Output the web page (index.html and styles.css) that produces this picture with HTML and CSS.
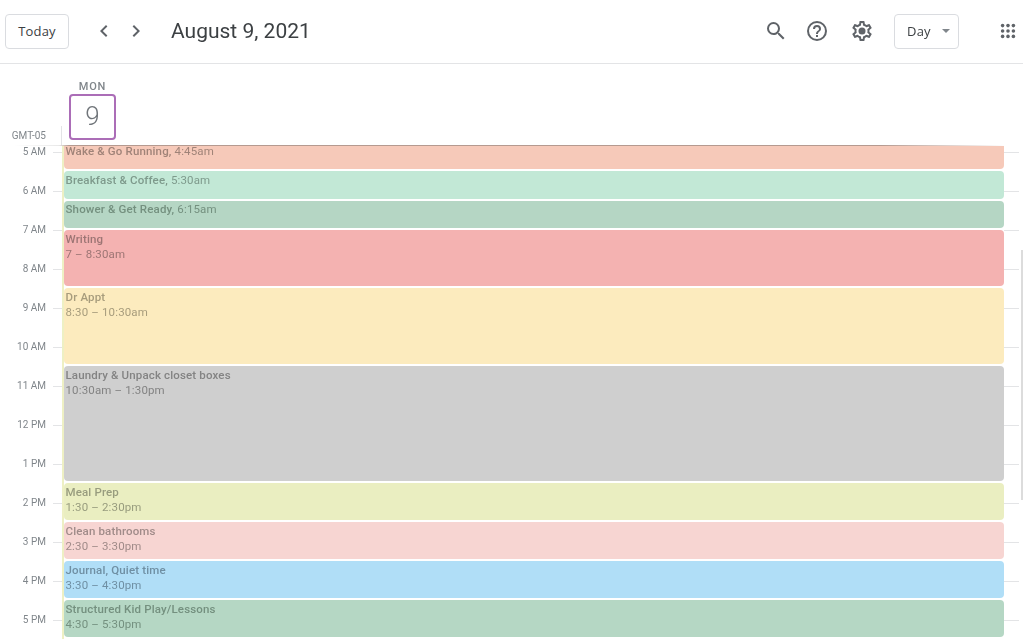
FILE: index.html
```html
<!DOCTYPE html>
<html lang="en">
<head>
  <meta charset="UTF-8">
  <title>Calendar - August 9, 2021</title>
  <link rel="stylesheet" href="styles.css">
</head>
<body>
  <header class="topbar">
    <button class="btn today">Today</button>
    <div class="nav-arrows">
      <svg width="24" height="24" viewBox="0 0 24 24"><path d="M15.4 7.4 14 6l-6 6 6 6 1.4-1.4L10.8 12z" fill="#5f6368"/></svg>
      <svg width="24" height="24" viewBox="0 0 24 24"><path d="M10 6 8.6 7.4 13.2 12l-4.600 4.600L10 18l6-6z" fill="#5f6368"/></svg>
    </div>
    <div class="title">August 9, 2021</div>
    <div class="tools">
      <svg width="24" height="24" viewBox="0 0 24 24"><path d="M15.5 14h-.79l-.28-.27A6.471 6.471 0 0 0 16 9.5 6.5 6.500 0 1 0 9.500 16c1.610 0 3.090-.59 4.230-1.570l.27.28v.79l5 4.990L20.490 19l-4.990-5zm-6 0C7.010 14 5 11.990 5 9.500S7.010 5 9.500 5 14 7.010 14 9.500 11.990 14 9.500 14z" fill="#5f6368"/></svg>
      <svg width="24" height="24" viewBox="0 0 24 24"><path d="M11 18h2v-2h-2v2zm1-16a10 10 0 1 0 0 20 10 10 0 0 0 0-20zm0 18a8 8 0 1 1 0-16 8 8 0 0 1 0 16zm0-14a4 4 0 0 0-4 4h2a2 2 0 1 1 4 0c0 2-3 1.750-3 5h2c0-2.250 3-2.500 3-5a4 4 0 0 0-4-4z" fill="#5f6368"/></svg>
      <svg class="gear" width="24" height="24" viewBox="0 0 24 24"><path d="M19.430 12.980c.04-.32.07-.64.07-.98 0-.34-.03-.66-.07-.98l2.110-1.650c.19-.15.24-.42.12-.64l-2-3.460a.5.5 0 0 0-.61-.22l-2.490 1c-.52-.4-1.080-.73-1.690-.98l-.38-2.650A.488.488 0 0 0 14 2h-4c-.25 0-.46.18-.49.42l-.38 2.650c-.61.25-1.170.59-1.690.98l-2.490-1a.566.566 0 0 0-.18-.03c-.17 0-.34.09-.43.25l-2 3.460c-.13.22-.07.49.12.64l2.110 1.650c-.04.32-.07.65-.07.98 0 .33.03.66.07.98l-2.110 1.650c-.19.15-.24.42-.12.64l2 3.460a.5.5 0 0 0 .61.22l2.490-1c.52.4 1.080.73 1.690.98l.38 2.650c.03.24.24.42.49.42h4c.25 0 .46-.18.49-.42l.38-2.650c.61-.25 1.170-.59 1.690-.98l2.490 1c.06.02.12.03.18.03.17 0 .34-.09.43-.25l2-3.460c.12-.22.07-.49-.12-.64l-2.110-1.650zm-1.980-1.710c.04.31.05.52.05.73 0 .21-.02.43-.05.73l-.14 1.130.89.7 1.080.84-.7 1.210-1.270-.51-1.040-.42-.9.68c-.43.32-.84.56-1.250.73l-1.060.43-.16 1.130-.2 1.350h-1.400l-.19-1.350-.16-1.130-1.060-.43c-.43-.18-.83-.41-1.230-.71l-.91-.7-1.060.43-1.270.51-.7-1.210 1.080-.84.89-.7-.14-1.130c-.03-.31-.05-.54-.05-.74s.02-.43.05-.73l.14-1.130-.89-.7-1.080-.84.7-1.210 1.270.51 1.040.42.9-.68c.43-.32.84-.56 1.250-.73l1.060-.43.16-1.130.2-1.350h1.390l.19 1.350.16 1.130 1.060.43c.43.18.83.41 1.230.71l.91.7 1.060-.43 1.270-.51.7 1.210-1.070.85-.89.7.14 1.130z" fill="#5f6368"/><circle cx="12" cy="12" r="3.500" fill="#5f6368"/></svg>
    </div>
    <button class="btn view">Day<span class="caret"></span></button>
    <svg class="apps" width="24" height="24" viewBox="0 0 24 24" fill="#5f6368">
      <circle cx="6" cy="6" r="2"/><circle cx="12" cy="6" r="2"/><circle cx="18" cy="6" r="2"/>
      <circle cx="6" cy="12" r="2"/><circle cx="12" cy="12" r="2"/><circle cx="18" cy="12" r="2"/>
      <circle cx="6" cy="18" r="2"/><circle cx="12" cy="18" r="2"/><circle cx="18" cy="18" r="2"/>
    </svg>
  </header>

  <section class="day-head">
    <div class="tz">GMT-05</div>
    <div class="day-col">
      <div class="dow">MON</div>
      <div class="daynum">9</div>
    </div>
  </section>

  <main class="grid">
    <div class="hours">
      <div class="hour">5 AM</div>
      <div class="hour">6 AM</div>
      <div class="hour">7 AM</div>
      <div class="hour">8 AM</div>
      <div class="hour">9 AM</div>
      <div class="hour">10 AM</div>
      <div class="hour">11 AM</div>
      <div class="hour">12 PM</div>
      <div class="hour">1 PM</div>
      <div class="hour">2 PM</div>
      <div class="hour">3 PM</div>
      <div class="hour">4 PM</div>
      <div class="hour">5 PM</div>
    </div>
    <div class="events">
      <div class="event wake"><b>Wake &amp; Go Running,</b> 4:45am</div>
      <div class="event breakfast"><b>Breakfast &amp; Coffee,</b> 5:30am</div>
      <div class="event shower"><b>Shower &amp; Get Ready,</b> 6:15am</div>
      <div class="event writing"><b>Writing</b><br>7 – 8:30am</div>
      <div class="event appt"><b>Dr Appt</b><br>8:30 – 10:30am</div>
      <div class="event laundry"><b>Laundry &amp; Unpack closet boxes</b><br>10:30am – 1:30pm</div>
      <div class="event meal"><b>Meal Prep</b><br>1:30 – 2:30pm</div>
      <div class="event clean"><b>Clean bathrooms</b><br>2:30 – 3:30pm</div>
      <div class="event journal"><b>Journal, Quiet time</b><br>3:30 – 4:30pm</div>
      <div class="event kids"><b>Structured Kid Play/Lessons</b><br>4:30 – 5:30pm</div>
    </div>
    <div class="ticks">
      <i></i><i></i><i></i><i></i><i></i><i></i><i></i><i></i><i></i><i></i><i></i><i></i><i></i>
    </div>
    <div class="scrollbar"></div>
  </main>
</body>
</html>
```

FILE: styles.css
```css
html, body {
  margin: 0;
  height: 639px;
  overflow: hidden;
}
body {
  font-family: Roboto, sans-serif;
  background: #fff;
  color: #3c4043;
  width: 1023px;
  filter: blur(0.45px);
}
svg {
  display: block;
}

/* top bar */
.topbar {
  display: flex;
  align-items: center;
  height: 63px;
  border-bottom: 1px solid #e3e4e6;
  padding-left: 5px;
  padding-right: 3px;
}
.btn {
  background: #fff;
  border: 1px solid #dadce0;
  border-radius: 4px;
  font-family: "Open Sans", sans-serif;
  font-size: 13px;
  letter-spacing: 0.2px;
  color: #3c4043;
  height: 35px;
  padding: 0 0 2px;
  box-sizing: border-box;
}
.today {
  width: 64px;
}
.nav-arrows {
  display: flex;
  gap: 8px;
  margin-left: 23px;
  margin-bottom: 2px;
}
.title {
  font-size: 21px;
  color: #3c4043;
  margin-left: 23px;
  margin-bottom: 2px;
  flex: 1;
}
.tools {
  display: flex;
  gap: 17px;
  margin-bottom: 2px;
}
.gear {
  margin-left: 4px;
}
.view {
  width: 65px;
  margin-left: 20px;
  display: flex;
  align-items: center;
  padding-left: 12px;
}
.caret {
  border-left: 4px solid transparent;
  border-right: 4px solid transparent;
  border-top: 4px solid #80868b;
  margin-left: 11px;
}
.apps {
  margin-left: 37px;
  margin-bottom: 2px;
  transform: scale(0.9);
}

/* day header */
.day-head {
  display: flex;
  height: 81px;
}
.tz {
  width: 46px;
  height: 19px;
  padding-right: 15px;
  align-self: flex-end;
  border-right: 1px solid #e3e4e6;
  font-size: 10px;
  line-height: 19px;
  color: #80868b;
  text-align: right;
}
.day-col {
  width: 47px;
  margin-left: 7px;
  text-align: center;
}
.dow {
  font-size: 11px;
  font-weight: 500;
  letter-spacing: 0.8px;
  color: #80868b;
  margin-top: 16px;
  height: 14px;
  line-height: 14px;
}
.daynum {
  width: 47px;
  height: 46px;
  box-sizing: border-box;
  border: 2px solid #ab6db7;
  border-radius: 4px;
  font-size: 26px;
  font-weight: 300;
  line-height: 40px;
  color: #70757a;
}

/* time grid */
.grid {
  display: flex;
  height: 493px;
  position: relative;
  border-top: 1px solid;
  border-image: linear-gradient(to right, #fff 15px, #e8e8e8 60px, #b59a90 70px, #b59a90 880px, #fff 1004px) 1;
}
.hours {
  width: 62px;
  flex: none;
  border-right: 2px solid #eef0c4;
}
.hour {
  height: 39px;
  font-size: 10px;
  line-height: 12px;
  color: #80868b;
  display: flex;
  justify-content: flex-end;
}
.hour::after {
  content: "";
  width: 9px;
  height: 1px;
  background: #e3e4e6;
  margin: 6px 0 0 7px;
}
.events {
  width: 940px;
  flex: none;
  display: flex;
  flex-direction: column;
  gap: 2px;
}
.event {
  flex: none;
  box-sizing: border-box;
  padding: 2px 3px 0 1.5px;
  border-radius: 4px;
  font-size: 11.5px;
  line-height: 14.5px;
  letter-spacing: 0.15px;
}
.event b {
  font-weight: 500;
}

.wake { height: 23px; padding-top: 0; line-height: 10px; background: #f6c9b9; color: #a08378; border-radius: 0 0 4px 4px; }
.breakfast { height: 28px; background: #c2e8d6; color: #7e9a8c; }
.shower { height: 27px; padding-top: 1px; background: #b5d6c4; color: #74907f; }
.writing { height: 56px; background: #f4b2b1; color: #9d7574; }
.appt { height: 76px; background: #fcebbe; color: #a79c7c; }
.laundry { height: 115px; background: #cfcfcf; color: #838383; }
.meal { height: 37px; background: #eaeec1; color: #989c7e; }
.clean { height: 37px; background: #f7d5d2; color: #a08b89; }
.journal { height: 37px; background: #b0def7; color: #6f8fa3; }
.kids { height: 37px; background: #b5d7c4; color: #74907f; }

.ticks {
  width: 15px;
  flex: none;
  padding-top: 6px;
}
.ticks i {
  display: block;
  height: 39px;
  box-sizing: border-box;
  border-top: 1px solid #e3e4e6;
}
.scrollbar {
  position: absolute;
  right: 0;
  top: 104px;
  width: 2px;
  height: 250px;
  background: #dcdcdc;
}
```
